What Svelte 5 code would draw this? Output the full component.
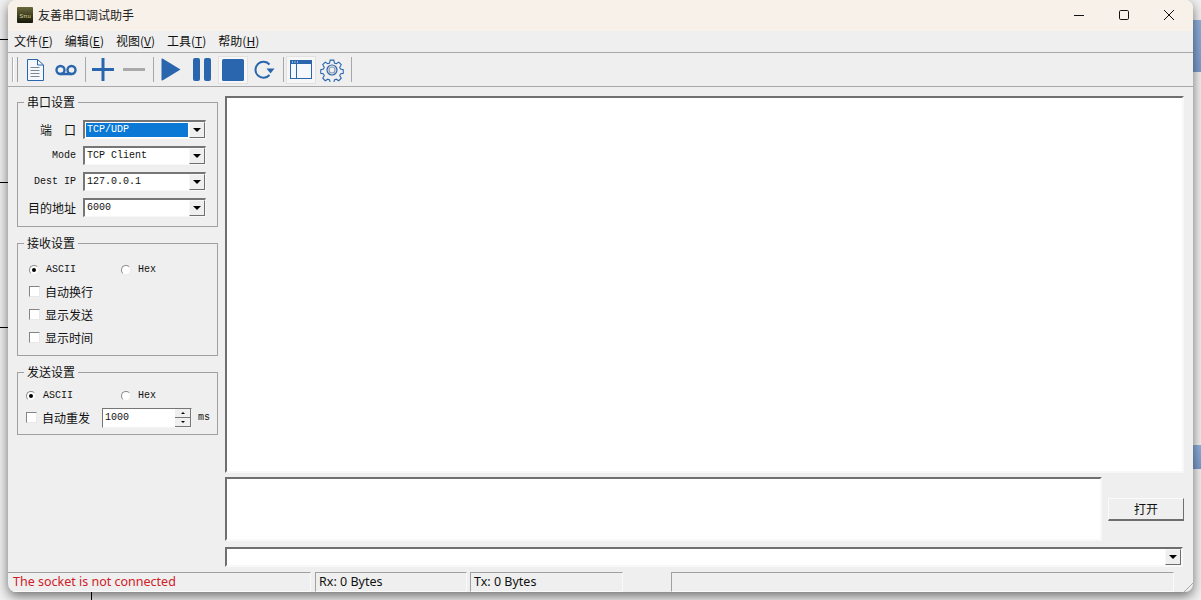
<script>
  const menus = ["文件(F)", "编辑(E)", "视图(V)", "工具(T)", "帮助(H)"];
  const mnemonic = (m) => m.slice(0, 3);
  const key = (m) => m[3];

  const ports = [
    { label: "端　口", value: "TCP/UDP", cjk: true, selected: true },
    { label: "Mode", value: "TCP Client" },
    { label: "Dest IP", value: "127.0.0.1" },
    { label: "目的地址", value: "6000", cjk: true }
  ];
  const recvChecks = ["自动换行", "显示发送", "显示时间"];
</script>

<div class="desk">
  <div class="window">
    <header class="titlebar">
      <svg class="appicon" width="16" height="16" viewBox="0 0 16 16">
        <defs>
          <linearGradient id="ai" x1="0" y1="0" x2="0" y2="1">
            <stop offset="0" stop-color="#6b6a3c" />
            <stop offset="1" stop-color="#171708" />
          </linearGradient>
        </defs>
        <rect width="16" height="16" rx="1" fill="url(#ai)" />
        <text x="8" y="10.5" font-size="6" text-anchor="middle" fill="#d8d49a" font-family="Liberation Sans">Sπu</text>
      </svg>
      <span class="title">友善串口调试助手</span>
      <div class="caption">
        <svg width="12" height="12" viewBox="0 0 12 12"><path d="M1 6.5h10" stroke="#111" fill="none" /></svg>
        <svg width="12" height="12" viewBox="0 0 12 12"><rect x="1.5" y="1.5" width="9" height="9" rx="1.2" stroke="#111" fill="none" /></svg>
        <svg width="12" height="12" viewBox="0 0 12 12"><path d="M1 1l10 10M11 1L1 11" stroke="#111" fill="none" /></svg>
      </div>
    </header>

    <nav class="menubar">
      {#each menus as m}
        <span class="menu">{mnemonic(m)}<u>{key(m)}</u>)</span>
      {/each}
    </nav>

    <div class="toolbar">
      <span class="grip"></span>
      <span class="tool">
        <svg width="18" height="22" viewBox="0 0 18 22" fill="none" stroke="#2a66ad">
          <path d="M1.500 .5h10l6 5.500v15.500h-16z" fill="#f4f7fb" />
          <path d="M11.500 .5v5.500h6" />
          <path d="M4.500 8.500h9M4.500 11.500h9M4.500 14.500h9M4.500 17.500h9" stroke="#7d8794" />
        </svg>
      </span>
      <span class="tool">
        <svg width="22" height="12" viewBox="0 0 22 12" fill="none" stroke="#2a66ad" stroke-width="2.4">
          <circle cx="5.5" cy="6" r="4" />
          <circle cx="16.5" cy="6" r="4" />
          <path d="M5.5 10h11" />
        </svg>
      </span>
      <span class="sep"></span>
      <span class="tool">
        <svg width="22" height="23" viewBox="0 0 22 23"><path d="M0 11.5h22M11 0v23" stroke="#2a66ad" stroke-width="3" /></svg>
      </span>
      <span class="tool">
        <svg width="22" height="23" viewBox="0 0 22 23"><path d="M0 11.5h22" stroke="#a9a9a9" stroke-width="3" /></svg>
      </span>
      <span class="sep"></span>
      <span class="tool">
        <svg width="20" height="23" viewBox="0 0 20 23"><path d="M1.5 0.5L19.5 11.5 1.5 22.5q-1 .4-1-1V1.500q0-1.400 1-1z" fill="#2a66ad" /></svg>
      </span>
      <span class="tool">
        <svg width="18" height="23" viewBox="0 0 18 23">
          <rect width="7" height="23" rx="2" fill="#2a66ad" />
          <rect x="11" width="7" height="23" rx="2" fill="#2a66ad" />
        </svg>
      </span>
      <span class="tool on">
        <svg width="22" height="22" viewBox="0 0 22 22"><rect width="22" height="22" rx="1.500" fill="#2a66ad" /></svg>
      </span>
      <span class="tool">
        <svg width="22" height="20" viewBox="0 0 22 20" fill="none">
          <path d="M16.500 4.500A8 8 0 1 0 16.500 15" stroke="#2a66ad" stroke-width="2" />
          <path d="M21.500 8.500h-8l4 5z" fill="#2a66ad" />
        </svg>
      </span>
      <span class="sep"></span>
      <span class="tool on">
        <svg width="22" height="19" viewBox="0 0 22 19" fill="none">
          <rect x=".5" y=".5" width="21" height="18" fill="#f4f7fb" stroke="#2a66ad" />
          <rect x="0" y="0" width="22" height="4" fill="#2a66ad" />
          <path d="M2 2h1M4.500 2h1M7 2h1" stroke="#fff" />
          <path d="M6.500 4v14" stroke="#2a66ad" />
        </svg>
      </span>
      <span class="tool">
        <svg width="24" height="24" viewBox="0 0 24 24" fill="none" stroke="#2a66ad" stroke-width="1.200">
          <path d="M10 1h4l.7 3.200 2 .8 2.800-1.700 2.800 2.800-1.700 2.800.8 2 3.100.7v4l-3.100.7-.8 2 1.700 2.800-2.800 2.800-2.800-1.700-2 .8-.7 3.200h-4l-.7-3.200-2-.8-2.800 1.700-2.800-2.800 1.700-2.800-.8-2-3.100-.7v-4l3.100-.7.8-2-1.700-2.800 2.800-2.800 2.800 1.700 2-.8z" transform="translate(1.200 1.200) scale(.9)" />
          <circle cx="12" cy="12" r="5" />
          <circle cx="12" cy="12" r="3" stroke="#8a9bb0" />
        </svg>
      </span>
      <span class="sep"></span>
    </div>

    <div class="body">
      <aside class="side">
        <fieldset class="group g-port">
          <legend>串口设置</legend>
          {#each ports as p}
            <div class="row">
              <span class="rowlabel" class:cjk={p.cjk}>{p.label}</span>
              <div class="combo">
                <span class="comboval" class:selected={p.selected}>{p.value}</span>
                <span class="arrowbtn"></span>
              </div>
            </div>
          {/each}
        </fieldset>

        <fieldset class="group g-recv">
          <legend>接收设置</legend>
          <div class="radios">
            <span class="opt ascii"><span class="radio checked"></span>ASCII</span>
            <span class="opt"><span class="radio"></span>Hex</span>
          </div>
          {#each recvChecks as c}
            <label class="check"><span class="box"></span>{c}</label>
          {/each}
        </fieldset>

        <fieldset class="group g-send">
          <legend>发送设置</legend>
          <div class="radios">
            <span class="opt ascii"><span class="radio checked"></span>ASCII</span>
            <span class="opt"><span class="radio"></span>Hex</span>
          </div>
          <div class="sendrow">
            <label class="check"><span class="box"></span>自动重发</label>
            <div class="spin">
              <span class="spinval">1000</span>
              <span class="spinbtns"><i class="up"></i><i class="down"></i></span>
            </div>
            <span class="unit">ms</span>
          </div>
        </fieldset>
      </aside>

      <main class="main">
        <div class="sunken output"></div>
        <div class="sendarea">
          <div class="sunken input"></div>
          <button class="open">打开</button>
        </div>
        <div class="sunken cmdline"><span class="arrowbtn"></span></div>
      </main>
    </div>

    <footer class="status">
      <span class="pane p1">The socket is not connected</span>
      <span class="pane p2">Rx: 0 Bytes</span>
      <span class="pane p3">Tx: 0 Bytes</span>
      <span class="pane p4"></span>
      <span class="resize"></span>
    </footer>
  </div>
</div>

<style>
  :global(body) { margin: 0; overflow: hidden; }
  .desk {
    width: 1201px;
    height: 600px;
    padding-left: 8px;
    box-sizing: border-box;
    overflow: hidden;
    background:
      linear-gradient(#000, #000) 0 39px / 8px 1px no-repeat,
      linear-gradient(#000, #000) 0 182px / 8px 1px no-repeat,
      linear-gradient(#000, #000) 0 327px / 8px 1px no-repeat,
      linear-gradient(#000, #000) 91px 592px / 1px 8px no-repeat,
      linear-gradient(#8fb0dc, #7b9ccb) 1193px 20px / 8px 52px no-repeat,
      linear-gradient(#8fb0dc, #7b9ccb) 1193px 445px / 8px 24px no-repeat,
      #f0f0f0;
    font-family: "Noto Sans CJK SC", sans-serif;
    font-size: 12px;
    color: #111;
  }
  .window {
    width: 1185px;
    height: 592px;
    display: flex;
    flex-direction: column;
    background: #efefef;
    border-radius: 8px;
    overflow: hidden;
    box-shadow: 0 4px 12px rgba(0, 0, 0, 0.55);
  }

  .titlebar {
    height: 31px;
    flex: none;
    display: flex;
    align-items: center;
    background: #f8f1e9;
    padding: 0 0 2px 9px;
    box-sizing: border-box;
  }
  .appicon { margin-right: 5px; }
  .title { color: #222; }
  .caption { margin-left: auto; display: flex; gap: 33px; margin-right: 18px; }

  .menubar {
    flex: none;
    display: flex;
    align-items: center;
    gap: 12px;
    padding-left: 6px;
    padding-bottom: 2px;
    height: 19px;
    border-bottom: 1px solid #a8a8a8;
  }
  .menu { line-height: 19px; }

  .toolbar {
    height: 33px;
    flex: none;
    display: flex;
    align-items: center;
    gap: 1px;
    padding-left: 4px;
    border-bottom: 1px solid #a8a8a8;
  }
  .grip {
    width: 4px;
    height: 25px;
    margin-right: 1px;
    border-left: 1px solid #b0b0b0;
    border-right: 1px solid #a0a0a0;
    box-shadow: inset 1px 0 #fff;
  }
  .tool {
    width: 30px;
    height: 28px;
    display: flex;
    align-items: center;
    justify-content: center;
    box-sizing: border-box;
  }
  .tool.on {
    background: #f6f6f6;
    border: 1px solid #e2e2e2;
  }
  .sep {
    width: 1px;
    height: 25px;
    margin: 0 1px 0 3px;
    background: #a8a8a8;
  }

  .body { flex: 1; display: flex; min-height: 0; }
  .side {
    width: 217px;
    flex: none;
    box-sizing: border-box;
    padding: 8px 7px 0 9px;
    display: flex;
    flex-direction: column;
    gap: 9px;
  }
  .group {
    margin: 0;
    padding: 0;
    box-sizing: border-box;
    border: 1px solid #a0a0a0;
    min-width: 0;
  }
  .group legend {
    margin-left: 6px;
    padding: 0 3px;
    line-height: 14px;
    font-size: 12px;
  }
  .g-port { height: 132px; padding-top: 7px; }
  .g-recv { height: 120px; }
  .g-send { height: 70px; }

  .row { display: flex; align-items: center; height: 26px; }
  .rowlabel {
    width: 58px;
    text-align: right;
    margin-right: 7px;
    font-family: "Liberation Mono", monospace;
    font-size: 10px;
    white-space: pre;
  }
  .rowlabel.cjk { font-family: "Noto Sans CJK SC", sans-serif; font-size: 12px; }

  .combo {
    width: 123px;
    height: 19px;
    box-sizing: border-box;
    display: flex;
    background: #fff;
    border-style: solid;
    border-width: 2px 1px 1px 2px;
    border-color: #767676 #f8f8f8 #f8f8f8 #767676;
  }
  .comboval {
    flex: 1;
    margin: 1px;
    padding-left: 1px;
    font-family: "Liberation Mono", monospace;
    font-size: 10px;
    line-height: 13px;
  }
  .comboval.selected { background: #0a78d4; color: #fff; }
  .arrowbtn {
    width: 16px;
    flex: none;
    box-sizing: border-box;
    background: #efefef;
    border: 1px solid;
    border-color: #f8f8f8 #6e6e6e #6e6e6e #f8f8f8;
    position: relative;
  }
  .arrowbtn::after {
    content: "";
    position: absolute;
    left: 50%;
    top: 50%;
    margin: -2px 0 0 -4px;
    border: 4px solid transparent;
    border-top: 4px solid #000;
    border-bottom: 0;
  }

  .radios { display: flex; height: 21px; align-items: center; }
  .g-recv .radios { margin-top: 9px; padding-left: 11px; }
  .g-send .radios { margin-top: 6px; padding-left: 8px; }
  .opt {
    display: flex;
    align-items: center;
    gap: 7px;
    font-family: "Liberation Mono", monospace;
    font-size: 10px;
  }
  .opt.ascii { width: 92px; }
  .g-send .opt.ascii { width: 95px; }
  .radio {
    width: 10px;
    height: 10px;
    box-sizing: border-box;
    border-radius: 50%;
    background: #fff;
    border: 1px solid;
    border-color: #8a8a8a #ececec #ececec #8a8a8a;
    position: relative;
  }
  .radio.checked::after {
    content: "";
    position: absolute;
    left: 2px;
    top: 2px;
    width: 4px;
    height: 4px;
    border-radius: 50%;
    background: #000;
  }
  .check {
    display: flex;
    align-items: center;
    gap: 5px;
    height: 23px;
    padding-left: 11px;
  }
  .box {
    width: 11px;
    height: 11px;
    box-sizing: border-box;
    background: #fff;
    border: 1px solid;
    border-color: #848484 #e8e8e8 #e8e8e8 #848484;
  }
  .sendrow { display: flex; align-items: center; height: 23px; }
  .sendrow .check { padding-left: 8px; width: 76px; flex: none; }
  .spin {
    width: 90px;
    height: 20px;
    box-sizing: border-box;
    display: flex;
    align-items: center;
    background: #fff;
    border: 1px solid;
    border-color: #767676 #f4f4f4 #f4f4f4 #767676;
  }
  .spinval { flex: 1; padding-left: 2px; font-family: "Liberation Mono", monospace; font-size: 10px; }
  .spinbtns { width: 16px; height: 18px; display: flex; flex-direction: column; background: #efefef; }
  .spinbtns i {
    flex: 1;
    display: flex;
    align-items: center;
    justify-content: center;
    border-bottom: 1px solid #777;
    border-right: 1px solid #777;
  }
  .spinbtns i::after {
    content: "";
    border: 2px solid transparent;
  }
  .spinbtns .up::after { border-bottom-color: #000; border-top: 0; }
  .spinbtns .down::after { border-top-color: #000; border-bottom: 0; }
  .unit { margin-left: 6px; font-family: "Liberation Mono", monospace; font-size: 10px; }

  .main {
    flex: 1;
    display: flex;
    flex-direction: column;
    padding: 9px 9px 5px 0;
    min-width: 0;
  }
  .sunken {
    background: #fff;
    box-sizing: border-box;
    border: 2px solid;
    border-color: #6f6f6f #f8f8f8 #f8f8f8 #6f6f6f;
  }
  .output { height: 377px; flex: none; }
  .sendarea { display: flex; align-items: center; margin-top: 4px; height: 64px; flex: none; }
  .input { width: 877px; height: 64px; flex: none; }
  .open {
    width: 76px;
    height: 23px;
    margin-left: 6px;
    padding: 0;
    box-sizing: border-box;
    font: 12px "Noto Sans CJK SC", sans-serif;
    color: #111;
    background: #efefef;
    border: 1px solid;
    border-color: #fafafa #6e6e6e #6e6e6e #fafafa;
    border-bottom-width: 2px;
  }
  .cmdline {
    height: 20px;
    margin-top: 6px;
    margin-right: 1px;
    flex: none;
    display: flex;
    justify-content: flex-end;
  }

  .status {
    height: 20px;
    flex: none;
    display: flex;
    font-family: "Noto Sans", sans-serif;
    font-size: 12.5px;
    position: relative;
  }
  .pane {
    box-sizing: border-box;
    line-height: 17px;
    border-top: 1px solid #a0a0a0;
    border-left: 1px solid #a0a0a0;
    border-right: 1px solid #fafafa;
    border-bottom: 1px solid #fafafa;
    padding-left: 3px;
    white-space: nowrap;
  }
  .p1 { width: 303px; color: #cf2027; border-left: 0; padding-left: 5px; }
  .p2 { width: 152px; margin-left: 4px; }
  .p3 { width: 153px; margin-left: 3px; }
  .p4 { width: 503px; margin-left: 48px; }
  .resize {
    position: absolute;
    right: 0;
    bottom: 0;
    width: 12px;
    height: 12px;
    background: repeating-linear-gradient(135deg, transparent 0 2px, #a8a8a8 2px 3px, transparent 3px 4px);
    clip-path: polygon(100% 0, 100% 100%, 0 100%);
  }
</style>
